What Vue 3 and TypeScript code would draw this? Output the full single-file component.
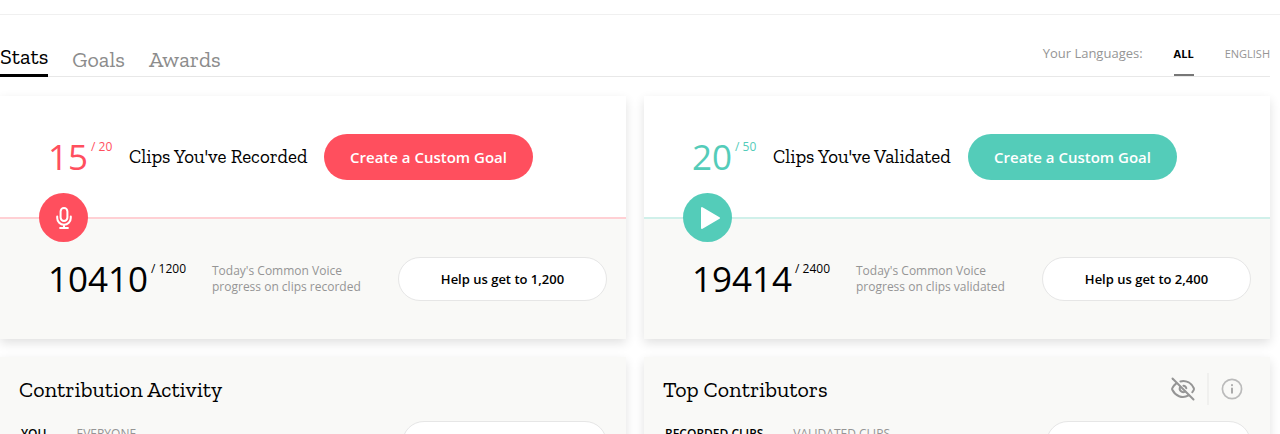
<script setup lang="ts">
import { ref } from 'vue'

interface Stat {
  id: string
  current: number
  goal: number
  title: string
  total: number
  totalGoal: number
  note: string
  action: string
}

const stats: Stat[] = [
  {
    id: 'record',
    current: 15,
    goal: 20,
    title: "Clips You've Recorded",
    total: 10410,
    totalGoal: 1200,
    note: 'progress on clips recorded',
    action: 'Help us get to 1,200',
  },
  {
    id: 'validate',
    current: 20,
    goal: 50,
    title: "Clips You've Validated",
    total: 19414,
    totalGoal: 2400,
    note: 'progress on clips validated',
    action: 'Help us get to 2,400',
  },
]

const tabs = ['Stats', 'Goals', 'Awards']
const activeTab = ref('Stats')
const languages = ['ALL', 'ENGLISH']
const activeLanguage = ref('ALL')

const panels = [
  { title: 'Contribution Activity', tabs: ['YOU', 'EVERYONE'], tools: false },
  { title: 'Top Contributors', tabs: ['RECORDED CLIPS', 'VALIDATED CLIPS'], tools: true },
]
const selected = ref(['YOU', 'RECORDED CLIPS'])
</script>

<template>
  <div class="page">
    <header class="top"></header>
    <main class="content">
      <div class="bar">
        <nav class="tabs">
          <a
            v-for="tab in tabs"
            :key="tab"
            href="#"
            :class="['tab', { active: tab === activeTab }]"
            @click.prevent="activeTab = tab"
          >{{ tab }}</a>
        </nav>
        <div class="languages">
          <span class="languages-label">Your Languages:</span>
          <button
            v-for="language in languages"
            :key="language"
            type="button"
            :class="['language', { active: language === activeLanguage }]"
            @click="activeLanguage = language"
          >{{ language }}</button>
        </div>
      </div>

      <div class="cards">
        <section v-for="stat in stats" :key="stat.id" :class="['card', stat.id]">
          <div class="personal">
            <p class="figure">{{ stat.current }}<span class="goal">/ {{ stat.goal }}</span></p>
            <h3 class="label">{{ stat.title }}</h3>
            <button type="button" class="pill create">Create a Custom Goal</button>
          </div>
          <div class="community">
            <span class="badge">
              <svg v-if="stat.id === 'record'" width="24" height="24" viewBox="0 0 24 24" fill="none" stroke="#fff" stroke-width="2" stroke-linecap="round" stroke-linejoin="round" aria-hidden="true">
                <rect x="8.6" y="2" width="6.8" height="13" rx="3.4" />
                <path d="M5.2 10.6v1.3a6.8 6.8 0 0 0 13.6 0v-1.3M12 18.8v3.3M8.1 22.1h7.8" />
              </svg>
              <svg v-else width="24" height="24" viewBox="0 0 24 24" aria-hidden="true">
                <path d="M6 2v20L23 12z" fill="#fff" stroke="#fff" stroke-width="2" stroke-linejoin="round" />
              </svg>
            </span>
            <p class="figure">{{ stat.total }}<span class="goal">/ {{ stat.totalGoal }}</span></p>
            <p class="note">Today's Common Voice<br />{{ stat.note }}</p>
            <button type="button" class="pill help">{{ stat.action }}</button>
          </div>
        </section>

        <section v-for="(panel, index) in panels" :key="panel.title" class="card panel">
          <div class="panel-head">
            <h2 class="panel-title">{{ panel.title }}</h2>
            <div v-if="panel.tools" class="tools">
              <button type="button" class="tool" aria-label="Hide">
                <svg width="24" height="24" viewBox="0 0 24 24" fill="none" stroke="#959595" stroke-width="2" stroke-linecap="round" stroke-linejoin="round" aria-hidden="true">
                  <path d="M1.5 1.5l21 21" />
                  <path d="M9.4 4.4C15.8 3 20.5 6.5 22.7 11c.4.8.3 1.5-.1 2.2l-1.3 2" />
                  <path d="M5 6.6C3.3 7.9 2 9.6 1.3 11.2c-.3.6-.3 1 0 1.6C4.2 18.7 11 22.2 17.6 18.4" />
                  <path d="M9.3 9.7c-2 3.3 1.5 6.7 4.8 4.9M12.4 8.7c1.5.2 2.6 1.3 2.9 2.6" />
                </svg>
              </button>
              <button type="button" class="tool" aria-label="Information">
                <svg width="24" height="24" viewBox="0 0 24 24" fill="none" stroke="#bbb" stroke-width="1.7" stroke-linecap="round" aria-hidden="true">
                  <circle cx="12" cy="12" r="9.6" />
                  <path d="M12 11.5v4.3M12 8.1v.1" stroke="#aaa" stroke-width="2" />
                </svg>
              </button>
            </div>
          </div>
          <div class="panel-filter">
            <button
              v-for="tab in panel.tabs"
              :key="tab"
              type="button"
              :class="['filter', { active: selected[index] === tab }]"
              @click="selected[index] = tab"
            >{{ tab }}</button>
            <select class="select" aria-label="Language"><option></option></select>
          </div>
        </section>
      </div>
    </main>
  </div>
</template>

<style>
body {
  margin: 0;
  background: #fff;
}
</style>

<style scoped>
.page {
  height: 100vh;
  overflow: hidden;
  color: #000;
  font-family: "Open Sans", "Noto Sans", sans-serif;
}
.page * {
  box-sizing: border-box;
}
button {
  font-family: inherit;
  cursor: pointer;
}
.top {
  height: 15px;
  border-bottom: 1px solid #f0f0f0;
}
.content {
  margin-right: 10px;
}
.bar {
  display: flex;
  justify-content: space-between;
  height: 62px;
  border-bottom: 1px solid #e8e8e8;
}
.tabs {
  display: flex;
  align-items: flex-end;
  gap: 24px;
}
.tab {
  height: 32px;
  color: #8c8c8c;
  font-family: "Zilla Slab", "DejaVu Serif", serif;
  font-size: 22px;
  line-height: 32px;
  text-decoration: none;
}
.tab.active {
  height: 36px;
  margin-bottom: -1px;
  border-bottom: 3px solid #000;
  color: #000;
}
.languages {
  display: flex;
  align-items: flex-end;
}
.languages-label {
  margin-right: 31px;
  color: #959595;
  font-size: 13px;
  line-height: 46px;
}
.language {
  height: 44px;
  margin-right: 31px;
  padding: 0;
  border: 0;
  border-bottom: 2px solid transparent;
  background: none;
  color: #959595;
  font-size: 11px;
}
.language:last-child {
  margin-right: 0;
}
.language.active {
  border-bottom-color: #777;
  color: #000;
  font-weight: 700;
}
.cards {
  display: grid;
  grid-template-columns: 1fr 1fr;
  gap: 18px;
  padding-top: 19px;
}
.card {
  background: #f9f9f7;
  box-shadow: 0 4px 10px rgba(0, 0, 0, 0.12);
}
.record {
  --accent: #ff4f5e;
  --line: #ffd0d4;
}
.validate {
  --accent: #54ccb9;
  --line: #d0f0ea;
}
.personal,
.community {
  display: grid;
  align-items: center;
  padding-left: 48px;
}
.personal {
  grid-template-columns: 81px 195px auto;
  justify-content: start;
  height: 121px;
  background: #fff;
}
.community {
  position: relative;
  grid-template-columns: 164px 186px auto;
  justify-content: start;
  height: 122px;
  border-top: 2px solid var(--line);
}
.badge {
  position: absolute;
  top: -26px;
  left: 39px;
  display: grid;
  place-items: center;
  width: 49px;
  height: 49px;
  border-radius: 50%;
  background: var(--accent);
}
.figure {
  display: flex;
  align-items: flex-start;
  gap: 3px;
  margin: 0;
  font-size: 35px;
  line-height: 44px;
  white-space: nowrap;
}
.personal .figure {
  color: var(--accent);
}
.goal {
  font-size: 12px;
  line-height: 24px;
}
.label {
  margin: 0;
  font-family: "Zilla Slab", "DejaVu Serif", serif;
  font-size: 19px;
  font-weight: 400;
  white-space: nowrap;
}
.note {
  margin: 0;
  color: #959595;
  font-size: 12px;
  line-height: 16px;
  white-space: nowrap;
}
.pill {
  width: 209px;
  padding: 0;
  border-radius: 23px;
  font-weight: 600;
  white-space: nowrap;
}
.create {
  height: 46px;
  border: 0;
  background: var(--accent);
  color: #fff;
  font-size: 15px;
}
.help {
  height: 44px;
  border: 1px solid #e6e6e6;
  background: #fff;
  color: #000;
  font-size: 13px;
}
.panel {
  padding: 0 19px 24px;
}
.panel-head {
  display: flex;
  align-items: center;
  justify-content: space-between;
  height: 64px;
}
.panel-title {
  margin: 0;
  font-family: "Zilla Slab", "DejaVu Serif", serif;
  font-size: 22px;
  font-weight: 400;
}
.tools {
  display: flex;
}
.tool {
  display: grid;
  place-items: center;
  width: 48px;
  height: 32px;
  padding: 0;
  border: 0;
  background: none;
}
.tool:last-child {
  width: 38px;
  padding-left: 10px;
  border-left: 2px solid #f0f0ee;
  margin-right: 6px;
}
.panel-filter {
  display: flex;
  align-items: flex-start;
  gap: 30px;
  padding-left: 2px;
}
.filter {
  padding: 4px 0;
  border: 0;
  background: none;
  color: #959595;
  font-size: 12px;
  line-height: 18px;
}
.filter.active {
  color: #000;
  font-weight: 600;
}
.select {
  width: 205px;
  height: 44px;
  margin-left: auto;
  border: 1px solid #e6e6e6;
  border-radius: 22px;
  background: #fff;
  appearance: none;
}
</style>
